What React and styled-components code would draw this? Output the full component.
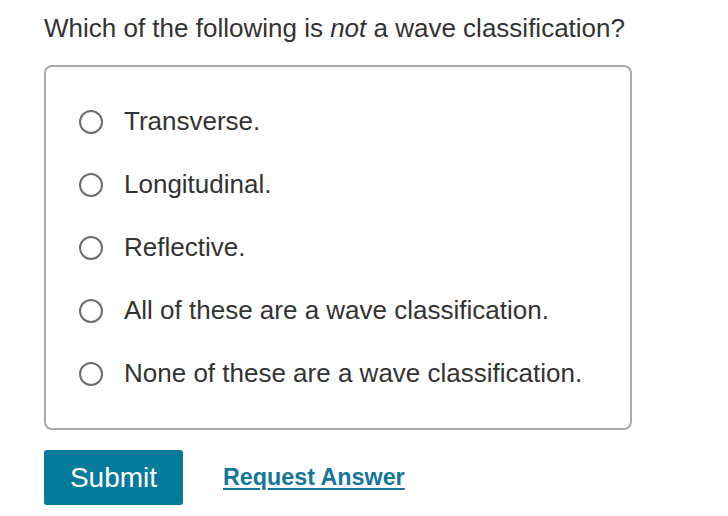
import styled, { createGlobalStyle } from 'styled-components';

const GlobalStyle = createGlobalStyle`
  body {
    margin: 0;
    background: #fff;
    font-family: "Liberation Sans", Arial, sans-serif;
    color: #333;
  }
`;

const Page = styled.div`
  padding: 13px 0 0 44px;
  width: 588px;
`;

const Question = styled.p`
  margin: 0 0 22px;
  font-size: 26px;
  line-height: 30px;
  color: #333;

  em {
    font-style: italic;
  }
`;

const Choices = styled.fieldset`
  margin: 0;
  padding: 23px 0 23px 32px;
  border: 2px solid #aaa;
  border-radius: 8px;
  display: flex;
  flex-direction: column;
`;

const Choice = styled.label`
  display: flex;
  align-items: center;
  gap: 21px;
  height: 63px;
  font-size: 26px;
  color: #333;
  cursor: pointer;
`;

const Radio = styled.input.attrs({ type: 'radio' })`
  appearance: none;
  margin: 0 0 0 1px;
  width: 24px;
  height: 24px;
  border: 2px solid #6d6d6d;
  border-radius: 50%;
  box-sizing: border-box;
  flex: none;
`;

const Actions = styled.div`
  display: flex;
  align-items: center;
  gap: 40px;
  margin-top: 20px;
`;

const SubmitButton = styled.button`
  width: 139px;
  height: 55px;
  border: none;
  border-radius: 3px;
  background: #067a9b;
  color: #fff;
  font-family: "Liberation Sans", Arial, sans-serif;
  font-size: 28px;
  cursor: pointer;
`;

const RequestLink = styled.a`
  font-size: 23.3px;
  font-weight: bold;
  color: #13779a;
  text-decoration: underline;
  text-underline-offset: 3px;
  cursor: pointer;
`;

const options = [
  'Transverse.',
  'Longitudinal.',
  'Reflective.',
  'All of these are a wave classification.',
  'None of these are a wave classification.',
];

export default function App() {
  return (
    <>
      <GlobalStyle />
      <Page>
        <Question>
          Which of the following is <em>not</em> a wave classification?
        </Question>
        <Choices>
          {options.map((text) => (
            <Choice key={text}>
              <Radio name="wave" />
              {text}
            </Choice>
          ))}
        </Choices>
        <Actions>
          <SubmitButton>Submit</SubmitButton>
          <RequestLink>Request Answer</RequestLink>
        </Actions>
      </Page>
    </>
  );
}
